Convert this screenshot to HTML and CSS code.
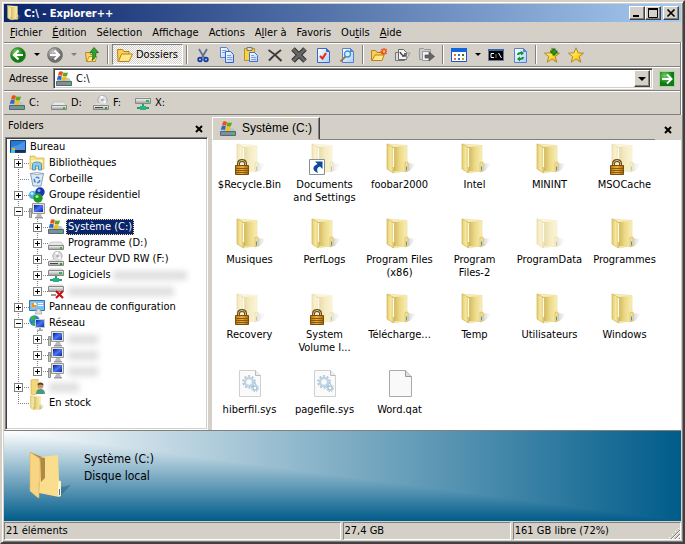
FILE: index.html
```html
<!DOCTYPE html>
<html lang="fr">

<head>
  <meta charset="UTF-8">
  <title>C:\ - Explorer++</title>
  <link rel="stylesheet" href="styles.css">
</head>

<body>
  <!-- icon sprite -->
  <svg class="sprite" aria-hidden="true">
    <defs>
      <linearGradient id="gFolder"><stop offset="0" stop-color="#cdb356"/><stop offset=".45" stop-color="#ecd987"/><stop offset="1" stop-color="#fbf0b8"/></linearGradient>
      <linearGradient id="gFlap"><stop offset="0" stop-color="#e6cc70"/><stop offset=".5" stop-color="#f6e7a0"/><stop offset="1" stop-color="#d8ba58"/></linearGradient>
      <linearGradient id="gShade"><stop offset="0" stop-color="#777" stop-opacity=".6"/><stop offset="1" stop-color="#999" stop-opacity="0"/></linearGradient>
      <linearGradient id="gDrive" x2="0" y2="1"><stop offset="0" stop-color="#fafafa"/><stop offset="1" stop-color="#9b9b9b"/></linearGradient>
      <linearGradient id="gLock"><stop offset="0" stop-color="#b87812"/><stop offset=".5" stop-color="#f0b040"/><stop offset="1" stop-color="#a86808"/></linearGradient>
      <linearGradient id="gBlue" x2="1" y2="1"><stop offset="0" stop-color="#fff"/><stop offset="1" stop-color="#a8d0ff"/></linearGradient>
      <linearGradient id="gScreen" x2="1" y2="1"><stop offset="0" stop-color="#0818a0"/><stop offset=".5" stop-color="#4878f0"/><stop offset="1" stop-color="#0820b0"/></linearGradient>
      <radialGradient id="gGreen" cx=".35" cy=".3"><stop offset="0" stop-color="#70d060"/><stop offset="1" stop-color="#127a12"/></radialGradient>
      <radialGradient id="gGray" cx=".35" cy=".3"><stop offset="0" stop-color="#c8c8c8"/><stop offset="1" stop-color="#707070"/></radialGradient>
      <linearGradient id="gStar" x2="1" y2="1"><stop offset="0" stop-color="#fffbb0"/><stop offset=".6" stop-color="#ffd62a"/><stop offset="1" stop-color="#e09810"/></linearGradient>
    </defs>

    <symbol id="folder" viewBox="0 0 32 32">
      <path d="M18 29l8-1 6-7-8-1z" fill="url(#gShade)"/>
      <path d="M3 1l20 1.500V27l-12 3z" fill="#faf0bc" stroke="#e6d695" stroke-width=".6"/>
      <path d="M9 4l13-1v17l2 1v7l-3 1-12-1z" fill="url(#gFolder)"/>
      <path d="M3 1l6 3c1.500 1 1.500 2 1.500 4v18l-1 4-6.500-4z" fill="url(#gFlap)" stroke="#cfb55a" stroke-width=".7"/>
      <path d="M9.500 5v19" stroke="#fffce8" stroke-width="1.300"/>
      <path d="M21 19.500l3-.5v9l-3 1z" fill="#f6e28c" stroke="#d4b658" stroke-width=".6"/>
      <path d="M22.500 23.500v4" stroke="#4a90d0"/>
    </symbol>

    <symbol id="bigfolder" viewBox="0 0 42 48">
      <path d="M31 45l11-11-10 2z" fill="#124a66" opacity=".35"/>
      <path d="M1 1l12 5v30z" fill="#b58b3e"/>
      <path d="M11 6l18-2 1 25 2 2v14l-2 1-20-4z" fill="#fbdd8e"/>
      <path d="M11 6l5 1v20l-4 4z" fill="#b08944"/>
      <path d="M1 1l9 6c1 1 1 3 1 5v18l-1 3v14l-2-1-7-6z" fill="#f7d582" stroke="#dcb662" stroke-width=".6"/>
      <path d="M29 31l3-1v14l-3 1z" fill="#fff3cf"/>
      <path d="M30.500 38v6" stroke="#3a80c0"/>
    </symbol>

    <symbol id="lock" viewBox="0 0 14 16">
      <path d="M3.500 7V4.500c0-4 7-4 7 0V7" fill="none" stroke="#6a5020" stroke-width="3"/>
      <path d="M3.500 7V4.500c0-4 7-4 7 0V7" fill="none" stroke="#d8c080" stroke-width="1"/>
      <path d="M.5 6.500h13v9H.5z" fill="url(#gLock)" stroke="#7a4c08"/>
      <path d="M1 9.500h12M1 11.500h12M1 13.500h12" stroke="#8a5a08"/>
    </symbol>

    <symbol id="shortcut" viewBox="0 0 16 16">
      <path d="M.5.5h15v15H.5z" fill="#fff" stroke="#8a9098"/>
      <path d="M6 2.500h7.500V10l-2.500-2.500c-3 1-3.500 3-2 6.500C3 12 3 7 8.500 5z" fill="#0c4aa0"/>
    </symbol>

    <symbol id="sysfile" viewBox="0 0 32 32">
      <path d="M5.500 2.500h16l5 5v21h-21z" fill="#fafafa" stroke="#d0d0d0"/>
      <path d="M21.500 2.500v5h5" fill="#eee" stroke="#bbb"/>
      <circle cx="15" cy="14" r="4" fill="none" stroke="#bfd4e4" stroke-width="2.500"/>
      <circle cx="15" cy="14" r="6" fill="none" stroke="#a4c0d6" stroke-width="1.500" stroke-dasharray="2 1.800"/>
      <circle cx="21" cy="20" r="2" fill="#fff" stroke="#a8c4d8" stroke-width="1.500"/>
      <circle cx="21" cy="20" r="3.500" fill="none" stroke="#9cbad0" stroke-dasharray="1.500 1.200"/>
    </symbol>

    <symbol id="file" viewBox="0 0 32 32">
      <path d="M5.500 2.500h16l6 6v20h-22z" fill="#f9f9f9" stroke="#aaa"/>
      <path d="M21.500 2.500v6h6" fill="#ddd" stroke="#999"/>
    </symbol>

    <symbol id="drive" viewBox="0 0 16 16">
      <path d="M3 7h10l3 4H0z" fill="#e8e8e8" stroke="#b0b0b0" stroke-width=".6"/>
      <path d="M.5 10.500h15v4H.5z" fill="url(#gDrive)" stroke="#888"/>
      <path d="M12 12h2v2h-2z" fill="#20c030"/>
    </symbol>

    <symbol id="sysdrive" viewBox="0 0 16 16">
      <path d="M3 7h10l3 4H0z" fill="#b8c8d0"/>
      <path d="M.5 10.500h15v4H.5z" fill="#7890a0" stroke="#586870"/>
      <path d="M12 12h2v2h-2z" fill="#30d040"/>
      <path d="M3 .8q2-1 4 .2L6 4.800Q4 3.800 2 4.800z" fill="#e85018"/>
      <path d="M7.500 1.300q2 1 4.500 0L11 5q-2 1-4.500 0z" fill="#60a818"/>
      <path d="M1.800 5.300q2-1 4 0L5 9q-2-1-4.200 0z" fill="#2868c8"/>
      <path d="M6.500 5.600q2 1 4.300 0l-1 3.800q-2 1-4.300 0z" fill="#f8c010"/>
    </symbol>

    <symbol id="dvd" viewBox="0 0 16 16">
      <circle cx="9.500" cy="5" r="4.700" fill="#e0e0e4" stroke="#999" stroke-width=".7"/>
      <path d="M9.500 5L7 1.500l3-1zM9.500 5l4 2-2 2z" fill="#fff"/>
      <circle cx="9.500" cy="5" r="1.300" fill="#aaa"/>
      <path d="M3 8h10l3 3H0z" fill="#ddd" opacity=".8"/>
      <path d="M.5 10.500h15v4H.5z" fill="url(#gDrive)" stroke="#888"/>
      <path d="M2 12.500h8" stroke="#444"/>
      <path d="M12 12h2v2h-2z" fill="#20a030"/>
    </symbol>

    <symbol id="netdrive" viewBox="0 0 16 16">
      <path d="M2 2h12l2 2H0z" fill="#eee" stroke="#aaa" stroke-width=".5"/>
      <path d="M.5 3.500h15v5H.5z" fill="url(#gDrive)" stroke="#888"/>
      <path d="M11 5h3v2h-3z" fill="#20c030"/>
      <path d="M7 9h2v3h5v2H2v-2h5z" fill="#18a070"/>
      <path d="M5 11h6v4H5z" fill="#30b080"/>
    </symbol>

    <symbol id="offdrive" viewBox="0 0 16 16">
      <path d="M2 2h12l2 2H0z" fill="#eee" stroke="#aaa" stroke-width=".5"/>
      <path d="M.5 3.500h15v5H.5z" fill="url(#gDrive)" stroke="#888"/>
      <path d="M3 12h5" stroke="#999" stroke-width="2"/>
      <path d="M8 8l7 7M15 8l-7 7" stroke="#c81010" stroke-width="2.200"/>
    </symbol>

    <symbol id="desktop" viewBox="0 0 16 16">
      <path d="M.5 1.500h15v12H.5z" fill="#2a78d0" stroke="#163e78"/>
      <path d="M1 8Q8 7 15 2v9H1z" fill="#4c94e4"/>
      <path d="M1 11h14v2H1z" fill="#1c2c48"/>
      <path d="M2 9h3v3H2z" fill="#f0b020"/><path d="M1 11h4v3H1z" fill="#3ac0f0"/>
    </symbol>

    <symbol id="library" viewBox="0 0 16 16">
      <path d="M1 1h5l1 2h8v11H1z" fill="#f6e08a" stroke="#cfae48" stroke-width=".7"/>
      <path d="M2 5h12v2H2z" fill="#fff3b8"/>
      <path d="M3.500 15V10q0-3 4.500-3t4.500 3v5h-3v-4h-3v4z" fill="#88ccf0" stroke="#3888b8" stroke-width=".8"/>
    </symbol>

    <symbol id="bin" viewBox="0 0 16 16">
      <path d="M1.500 2.500L4 15h8l2.500-12.500z" fill="#dceaf4" stroke="#8aa0b0"/>
      <path d="M1.500 2.500q6-2 13 0-6 2-13 0z" fill="#fff" stroke="#8898a8" stroke-width=".8"/>
      <circle cx="8" cy="9" r="2.700" fill="none" stroke="#4888d0" stroke-width="1.600" stroke-dasharray="4 1.500"/>
    </symbol>

    <symbol id="homegroup" viewBox="0 0 16 16">
      <circle cx="4" cy="8" r="4" fill="#48b0e0"/><circle cx="3" cy="6.500" r="1.500" fill="#c0ecff"/>
      <circle cx="11" cy="5" r="4.700" fill="#1838b0"/><circle cx="10" cy="3.500" r="1.500" fill="#88a8ff"/>
      <circle cx="9" cy="11" r="4.700" fill="#209828"/><circle cx="8" cy="9.500" r="1.600" fill="#a0f090"/>
    </symbol>

    <symbol id="computer" viewBox="0 0 16 16">
      <path d="M.5 5.500h2v9h-2z" fill="#ccc" stroke="#777" stroke-width=".8"/>
      <path d="M3.500.5h12v10h-12z" fill="#e4e4dc" stroke="#999"/>
      <path d="M5 2h9v7H5z" fill="url(#gScreen)"/>
      <path d="M8 11h4l1 3H7z" fill="#bbb"/><path d="M6 14h8v1.500H6z" fill="#999"/>
      <path d="M1 8h1" stroke="#20c020"/>
    </symbol>

    <symbol id="control" viewBox="0 0 16 16">
      <path d="M.5 1.500h15v10H.5z" fill="#7cc0f0" stroke="#2e78b8"/>
      <circle cx="5" cy="6" r="2.600" fill="#fff"/><path d="M5 6V3.400A2.600 2.600 0 1 0 7.600 6z" fill="#f09020"/>
      <path d="M9 4.500h5M9 6.500h5" stroke="#fff"/>
      <path d="M6 15l2-5h3l2 5z" fill="#ddd" stroke="#999" stroke-width=".6"/>
    </symbol>

    <symbol id="network" viewBox="0 0 16 16">
      <circle cx="5.500" cy="5.500" r="5.200" fill="#2484d8"/>
      <path d="M2 2q3-2 5 0L5 5 2 6zM3 8l4-1 1 3-3 1z" fill="#38b838"/>
      <path d="M6.500 4.500h9v8h-9z" fill="url(#gScreen)" stroke="#ccc"/>
      <path d="M10 13h2v1.500h2V16H8v-1.500h2z" fill="#aaa"/>
    </symbol>

    <symbol id="userfolder" viewBox="0 0 16 16">
      <path d="M2 1l7-1 1 14-6 2-2-1z" fill="#f2d878" stroke="#caa648" stroke-width=".6"/>
      <circle cx="11.500" cy="7" r="2.800" fill="#c89468"/>
      <path d="M8.500 6.500q0-3 3-3t3 3q-3-2-6 0z" fill="#5a3a20"/>
      <path d="M7 15q0-5 4.500-5t4.500 5z" fill="#4a9880"/>
    </symbol>

    <symbol id="back" viewBox="0 0 16 16">
      <circle cx="8" cy="8" r="7.500" fill="url(#gGreen)" stroke="#2c7a2c" stroke-width=".6"/>
      <path d="M8.500 3.500L4 8l4.500 4.500M4.500 8H13" fill="none" stroke="#fff" stroke-width="2.200"/>
    </symbol>

    <symbol id="forward" viewBox="0 0 16 16">
      <circle cx="8" cy="8" r="7.500" fill="url(#gGray)" stroke="#666" stroke-width=".6"/>
      <path d="M7.500 3.500L12 8l-4.500 4.500M11.500 8H3" fill="none" stroke="#fff" stroke-width="2.200"/>
    </symbol>

    <symbol id="up" viewBox="0 0 16 16">
      <path d="M1.500 5.500h4l1 2h5v7h-9z" fill="#f8d860" stroke="#b88820"/>
      <path d="M3 14.500l2-5h8l-2 5z" fill="#ffe890" stroke="#b88820" stroke-width=".8"/>
      <path d="M10 .5l4.500 5H12c0 4-1 6-4 8 1-3 1-5 .5-8H6z" fill="#30a830" stroke="#106810" stroke-width=".8"/>
    </symbol>

    <symbol id="openfolder" viewBox="0 0 16 16">
      <path d="M1 14.500l-.5-12h5l1.500 2h5v3" fill="#f8d058" stroke="#c08010"/>
      <path d="M1.500 14.500l3-7.500h11L12 14.500z" fill="#ffe88c" stroke="#c08010"/>
    </symbol>

    <symbol id="cut" viewBox="0 0 16 16">
      <path d="M4 2l5 8.500M12 2l-5 8.500" stroke="#607090" stroke-width="1.800"/>
      <circle cx="5" cy="12.500" r="1.800" fill="none" stroke="#103ca8" stroke-width="1.800"/>
      <circle cx="11" cy="12.500" r="1.800" fill="none" stroke="#103ca8" stroke-width="1.800"/>
    </symbol>

    <symbol id="copy" viewBox="0 0 16 16">
      <path d="M1.500.5h6l2 2v8h-8z" fill="url(#gBlue)" stroke="#5a80d0"/>
      <path d="M6.500 4.500h5l3 3v8h-8z" fill="url(#gBlue)" stroke="#3c60c0"/>
      <path d="M3 3.500h4M3 5.500h3M8 8.500h4M8 10.500h5M8 12.500h5" stroke="#80a0e0"/>
    </symbol>

    <symbol id="paste" viewBox="0 0 16 16">
      <path d="M1.500 1.500h10v12h-10z" fill="#f8d040" stroke="#b89028"/>
      <path d="M4 .5h5v3H4z" fill="#ddd" stroke="#777"/>
      <path d="M6.500 5.500h5l3 3v6h-8z" fill="url(#gBlue)" stroke="#4870c8"/>
      <path d="M8 8.500h3M8 10.500h5M8 12.500h5" stroke="#80a0e0"/>
    </symbol>

    <symbol id="delete" viewBox="0 0 16 16">
      <path d="M1.500 3Q8 7 14.500 14M14 3Q7 8 2 13.500" fill="none" stroke="#3c3c3c" stroke-width="2"/>
    </symbol>

    <symbol id="shred" viewBox="0 0 16 16">
      <path d="M2 2l12 12M14 2L2 14" stroke="#333" stroke-width="5"/>
      <path d="M2 2l12 12M14 2L2 14" stroke="#666" stroke-width="3"/>
    </symbol>

    <symbol id="props" viewBox="0 0 16 16">
      <path d="M2.500 1.500h9l3 3v11h-12z" fill="url(#gBlue)" stroke="#3c68c0"/>
      <path d="M11.500 1.500v3h3" fill="#3c68c0" stroke="#3c68c0"/>
      <path d="M5 9l2.500 2.500L11 6" fill="none" stroke="#e83010" stroke-width="2.200"/>
    </symbol>

    <symbol id="search" viewBox="0 0 16 16">
      <path d="M3.500 1.500h8l3 3v11h-11z" fill="url(#gBlue)" stroke="#5a80d0"/>
      <path d="M11.500 1.500v3h3" fill="#5a80d0" stroke="#5a80d0"/>
      <circle cx="8.500" cy="7" r="3" fill="#d4f0ff" stroke="#4090d0" stroke-width="1.300"/>
      <path d="M6.500 9.500l-5 5" stroke="#a07848" stroke-width="2"/>
    </symbol>

    <symbol id="newfolder" viewBox="0 0 16 16">
      <path d="M.5 13.500v-10h4l1.500 2h6v3" fill="#f8d058" stroke="#c08010"/>
      <path d="M1 13.500L4 8h9l-2 5.500z" fill="#ffe88c" stroke="#c08010"/>
      <path d="M13 1v7M9.500 4.500h7M10.500 2l5 5M15.500 2l-5 5" stroke="#e84820" stroke-width="1.300"/>
      <circle cx="13" cy="4.500" r="1.300" fill="#ffd030"/>
    </symbol>

    <symbol id="copyto" viewBox="0 0 16 16">
      <path d="M.5 5.500h6l3 3v5h-9z" fill="#ddd" stroke="#777"/>
      <path d="M3.500 2.500h5l3 3v7h-8z" fill="#f4f4f4" stroke="#666"/>
      <path d="M5 5q2 4 5 4V6M10 9H7" fill="none" stroke="#444" stroke-width="1.500"/>
      <path d="M11.500 12l3.500-6h-3" fill="#ddd" stroke="#999"/>
    </symbol>

    <symbol id="moveto" viewBox="0 0 16 16">
      <path d="M.5 1.500h4l1 1h6v10H.5z" fill="#ccc" stroke="#999"/>
      <path d="M3.500 4.500h7v9h-7z" fill="#f0f0f0" stroke="#999"/>
      <path d="M6 8h4V5l5.500 4.500L10 14v-3H6z" fill="#666" stroke="#444" stroke-width=".6"/>
    </symbol>

    <symbol id="views" viewBox="0 0 16 16">
      <path d="M.5 1.500h15v13H.5z" fill="#fff" stroke="#1058c8"/>
      <path d="M0 1h16v4H0z" fill="#1464dc"/>
      <path d="M3 7h2v2H3zM3 11h2v2H3z" fill="#e07050"/>
      <path d="M7 7h2v2H7zM7 11h2v2H7z" fill="#4868c8"/>
      <path d="M11 7h2v2h-2z" fill="#287828"/><path d="M11 11h2v2h-2z" fill="#d09020"/>
    </symbol>

    <symbol id="cmd" viewBox="0 0 16 16">
      <path d="M.5 2.500h15v11H.5z" fill="#000" stroke="#6878a0"/>
      <path d="M0 2h16v2H0z" fill="#3c68b0"/>
      <path d="M6 6.500H3v4h3M8 7.500v1M8 9.500v1M10.500 6l3 5" fill="none" stroke="#fff"/>
    </symbol>

    <symbol id="refresh" viewBox="0 0 16 16">
      <path d="M2.500 1.500h9l3 3v11h-12z" fill="url(#gBlue)" stroke="#5a80d0"/>
      <path d="M11.500 1.500v3h3" fill="#5a80d0" stroke="#5a80d0"/>
      <path d="M5 8q0-3 4-3l-.5-1.500L12 6 9.500 8.500 9 7Q7 7 7 8zM12 10q0 3-4 3v1.500L5 12l3-2.500V11q2 0 2-1z" fill="#189028"/>
    </symbol>

    <symbol id="star" viewBox="0 0 16 16">
      <path d="M8 .8l2 5 5.500.4-4.300 3.400 1.600 5.600L8 12l-4.800 3.200 1.600-5.600L.5 6.200 6 5.800z" fill="url(#gStar)" stroke="#b08018" stroke-width=".9"/>
    </symbol>

    <symbol id="addstar" viewBox="0 0 16 16">
      <use href="#star"/>
      <path d="M10 1.500v7M6.500 5h7" stroke="#0c680c" stroke-width="3"/>
      <path d="M10 2.500v5M7.500 5h5" stroke="#38a838"/>
    </symbol>

    <symbol id="go" viewBox="0 0 16 16">
      <path d="M.5.5h15v15H.5z" fill="url(#gGreen)" stroke="#a0d8a0"/>
      <path d="M3 8h9M8 3.500L12.500 8 8 12.500" fill="none" stroke="#fff" stroke-width="2"/>
    </symbol>

    <symbol id="close" viewBox="0 0 8 8">
      <path d="M1 1l6 6M7 1L1 7" stroke="#000" stroke-width="2"/>
    </symbol>
  </svg>

  <div class="window">
    <header class="titlebar">
      <svg class="icon"><use href="#folder"/></svg>
      <h1>C:\ - Explorer++</h1>
      <button class="caption-btn" aria-label="Réduire"><svg viewBox="0 0 10 10"><path d="M1 8h6" stroke="#000" stroke-width="2"/></svg></button>
      <button class="caption-btn" aria-label="Agrandir"><svg viewBox="0 0 10 10"><path d="M.5 1.500h9v8h-9z" fill="none" stroke="#000"/><path d="M0 1h10" stroke="#000" stroke-width="2"/></svg></button>
      <button class="caption-btn last" aria-label="Fermer"><svg viewBox="0 0 10 10"><path d="M1.500 1.500l7 7M8.500 1.500l-7 7" stroke="#000" stroke-width="1.700"/></svg></button>
    </header>

    <nav class="menubar">
      <button><u>F</u>ichier</button>
      <button><u>É</u>dition</button>
      <button>Sélection</button>
      <button>Aff<u>i</u>chage</button>
      <button>Actions</button>
      <button>A<u>l</u>ler à</button>
      <button>Favoris</button>
      <button>Ou<u>t</u>ils</button>
      <button><u>A</u>ide</button>
    </nav>

    <div class="band toolbar">
      <button class="tool" aria-label="Précédent"><svg class="icon"><use href="#back"/></svg></button>
      <button class="drop" aria-label="Historique précédent"></button>
      <button class="tool" aria-label="Suivant"><svg class="icon"><use href="#forward"/></svg></button>
      <button class="drop off" aria-label="Historique suivant"></button>
      <button class="tool" aria-label="Dossier parent"><svg class="icon"><use href="#up"/></svg></button>
      <span class="sep"></span>
      <button class="tool pressed"><svg class="icon"><use href="#openfolder"/></svg>Dossiers</button>
      <span class="sep"></span>
      <button class="tool" aria-label="Couper"><svg class="icon"><use href="#cut"/></svg></button>
      <button class="tool" aria-label="Copier"><svg class="icon"><use href="#copy"/></svg></button>
      <button class="tool" aria-label="Coller"><svg class="icon"><use href="#paste"/></svg></button>
      <button class="tool" aria-label="Supprimer"><svg class="icon"><use href="#delete"/></svg></button>
      <button class="tool" aria-label="Supprimer définitivement"><svg class="icon"><use href="#shred"/></svg></button>
      <button class="tool" aria-label="Propriétés"><svg class="icon"><use href="#props"/></svg></button>
      <button class="tool" aria-label="Rechercher"><svg class="icon"><use href="#search"/></svg></button>
      <span class="sep"></span>
      <button class="tool" aria-label="Nouveau dossier"><svg class="icon"><use href="#newfolder"/></svg></button>
      <button class="tool" aria-label="Copier vers"><svg class="icon"><use href="#copyto"/></svg></button>
      <button class="tool" aria-label="Déplacer vers"><svg class="icon"><use href="#moveto"/></svg></button>
      <span class="sep"></span>
      <button class="tool" aria-label="Affichages"><svg class="icon"><use href="#views"/></svg></button>
      <button class="drop" aria-label="Choisir l'affichage"></button>
      <button class="tool" aria-label="Invite de commandes"><svg class="icon"><use href="#cmd"/></svg></button>
      <button class="tool" aria-label="Actualiser"><svg class="icon"><use href="#refresh"/></svg></button>
      <span class="sep"></span>
      <button class="tool" aria-label="Ajouter aux favoris"><svg class="icon"><use href="#addstar"/></svg></button>
      <button class="tool" aria-label="Favoris"><svg class="icon"><use href="#star"/></svg></button>
    </div>

    <div class="band address">
      <label for="path">Adresse</label>
      <div class="combo">
        <svg class="icon"><use href="#sysdrive"/></svg>
        <input id="path" type="text" value="C:\">
        <button class="combo-btn" aria-label="Dérouler"></button>
      </div>
      <button class="go" aria-label="Aller"><svg class="icon"><use href="#go"/></svg></button>
    </div>

    <div class="band drives">
      <button><svg class="icon"><use href="#sysdrive"/></svg>C:</button>
      <button><svg class="icon"><use href="#drive"/></svg>D:</button>
      <button><svg class="icon"><use href="#dvd"/></svg>F:</button>
      <button><svg class="icon"><use href="#netdrive"/></svg>X:</button>
    </div>

    <main class="content">
      <aside class="folders">
        <div class="folders-head">
          <h2>Folders</h2>
          <button class="close" aria-label="Fermer le volet"><svg><use href="#close"/></svg></button>
        </div>
        <div class="tree">
          <div class="row"><svg class="icon"><use href="#desktop"/></svg><span class="name">Bureau</span></div>
          <ul>
            <li><div class="row branch"><button class="toggle" aria-label="Développer"></button><svg class="icon"><use href="#library"/></svg><span class="name">Bibliothèques</span></div></li>
            <li><div class="row branch leaf"><svg class="icon"><use href="#bin"/></svg><span class="name">Corbeille</span></div></li>
            <li><div class="row branch"><button class="toggle" aria-label="Développer"></button><svg class="icon"><use href="#homegroup"/></svg><span class="name">Groupe résidentiel</span></div></li>
            <li>
              <div class="row branch"><button class="toggle open" aria-label="Réduire"></button><svg class="icon"><use href="#computer"/></svg><span class="name">Ordinateur</span></div>
              <ul>
                <li><div class="row branch"><button class="toggle" aria-label="Développer"></button><svg class="icon"><use href="#sysdrive"/></svg><span class="name selected">Système (C:)</span></div></li>
                <li><div class="row branch"><button class="toggle" aria-label="Développer"></button><svg class="icon"><use href="#drive"/></svg><span class="name">Programme (D:)</span></div></li>
                <li><div class="row branch"><button class="toggle" aria-label="Développer"></button><svg class="icon"><use href="#dvd"/></svg><span class="name">Lecteur DVD RW (F:)</span></div></li>
                <li><div class="row branch"><button class="toggle" aria-label="Développer"></button><svg class="icon"><use href="#netdrive"/></svg><span class="name">Logiciels</span><span class="masked wide"></span></div></li>
                <li><div class="row branch"><button class="toggle" aria-label="Développer"></button><svg class="icon"><use href="#offdrive"/></svg><span class="masked widest"></span></div></li>
              </ul>
            </li>
            <li><div class="row branch"><button class="toggle" aria-label="Développer"></button><svg class="icon"><use href="#control"/></svg><span class="name">Panneau de configuration</span></div></li>
            <li>
              <div class="row branch"><button class="toggle open" aria-label="Réduire"></button><svg class="icon"><use href="#network"/></svg><span class="name">Réseau</span></div>
              <ul>
                <li><div class="row branch"><button class="toggle" aria-label="Développer"></button><svg class="icon"><use href="#computer"/></svg><span class="masked"></span></div></li>
                <li><div class="row branch"><button class="toggle" aria-label="Développer"></button><svg class="icon"><use href="#computer"/></svg><span class="masked"></span></div></li>
                <li><div class="row branch"><button class="toggle" aria-label="Développer"></button><svg class="icon"><use href="#computer"/></svg><span class="masked"></span></div></li>
              </ul>
            </li>
            <li><div class="row branch"><button class="toggle" aria-label="Développer"></button><svg class="icon"><use href="#userfolder"/></svg><span class="masked"></span></div></li>
            <li><div class="row branch leaf"><svg class="icon"><use href="#folder"/></svg><span class="name">En stock</span></div></li>
          </ul>
        </div>
      </aside>

      <section class="pane">
        <div class="tabs">
          <button class="tab"><svg class="icon"><use href="#sysdrive"/></svg>Système (C:)</button>
          <div class="tabs-rest"></div>
          <button class="close" aria-label="Fermer l'onglet"><svg><use href="#close"/></svg></button>
        </div>
        <ul class="files">
          <li><span class="thumb"><svg class="pic faded"><use href="#folder"/></svg><svg class="badge"><use href="#lock"/></svg></span>$Recycle.Bin</li>
          <li><span class="thumb"><svg class="pic faded"><use href="#folder"/></svg><svg class="badge"><use href="#shortcut"/></svg></span>Documents<br>and Settings</li>
          <li><span class="thumb"><svg class="pic"><use href="#folder"/></svg></span>foobar2000</li>
          <li><span class="thumb"><svg class="pic"><use href="#folder"/></svg></span>Intel</li>
          <li><span class="thumb"><svg class="pic"><use href="#folder"/></svg></span>MININT</li>
          <li><span class="thumb"><svg class="pic faded"><use href="#folder"/></svg><svg class="badge"><use href="#lock"/></svg></span>MSOCache</li>
          <li><span class="thumb"><svg class="pic"><use href="#folder"/></svg></span>Musiques</li>
          <li><span class="thumb"><svg class="pic"><use href="#folder"/></svg></span>PerfLogs</li>
          <li><span class="thumb"><svg class="pic"><use href="#folder"/></svg></span>Program Files<br>(x86)</li>
          <li><span class="thumb"><svg class="pic"><use href="#folder"/></svg></span>Program<br>Files-2</li>
          <li><span class="thumb"><svg class="pic faded"><use href="#folder"/></svg></span>ProgramData</li>
          <li><span class="thumb"><svg class="pic"><use href="#folder"/></svg></span>Programmes</li>
          <li><span class="thumb"><svg class="pic faded"><use href="#folder"/></svg><svg class="badge"><use href="#lock"/></svg></span>Recovery</li>
          <li><span class="thumb"><svg class="pic faded"><use href="#folder"/></svg><svg class="badge"><use href="#lock"/></svg></span>System<br>Volume I...</li>
          <li><span class="thumb"><svg class="pic"><use href="#folder"/></svg></span>Télécharge...</li>
          <li><span class="thumb"><svg class="pic"><use href="#folder"/></svg></span>Temp</li>
          <li><span class="thumb"><svg class="pic"><use href="#folder"/></svg></span>Utilisateurs</li>
          <li><span class="thumb"><svg class="pic"><use href="#folder"/></svg></span>Windows</li>
          <li><span class="thumb"><svg class="pic"><use href="#sysfile"/></svg></span>hiberfil.sys</li>
          <li><span class="thumb"><svg class="pic"><use href="#sysfile"/></svg></span>pagefile.sys</li>
          <li><span class="thumb"><svg class="pic"><use href="#file"/></svg></span>Word.qat</li>
        </ul>
      </section>
    </main>

    <section class="details">
      <svg><use href="#bigfolder"/></svg>
      <p>Système (C:)<br>Disque local</p>
    </section>

    <footer class="status">
      <span>21 éléments</span>
      <span>27,4 GB</span>
      <span class="grip">161 GB libre (72%)</span>
    </footer>
  </div>
</body>

</html>
```

FILE: styles.css
```css
* {
  box-sizing: border-box;
}

body {
  margin: 0;
  font-family: "DejaVu Sans Condensed", "DejaVu Sans", sans-serif;
  font-size: 11px;
  line-height: 13px;
  color: #000;
}

button, input {
  font: inherit;
  color: inherit;
  padding: 0;
  border: none;
  background: none;
}

h1, h2, p, ul {
  margin: 0;
  padding: 0;
  font-size: inherit;
  font-weight: normal;
  list-style: none;
}

.sprite {
  position: absolute;
  width: 0;
  height: 0;
}

.icon {
  width: 16px;
  height: 16px;
  flex: none;
}

.window {
  display: flex;
  flex-direction: column;
  min-height: 100vh;
  padding: 2px;
  background: #d4d0c8;
  border: 2px solid;
  border-color: #d4d0c8 #404040 #404040 #d4d0c8;
  box-shadow: inset 1px 1px #fff, inset -1px -1px #808080;
}

/* title bar */
.titlebar {
  display: flex;
  align-items: center;
  height: 18px;
  padding: 0 2px;
  background: linear-gradient(90deg, #0a246a, #a6caf0);
  color: #fff;
}

.titlebar h1 {
  flex: 1;
  padding-left: 2px;
  font-weight: bold;
}

.caption-btn {
  display: flex;
  align-items: center;
  justify-content: center;
  width: 16px;
  height: 14px;
  background: #d4d0c8;
  border: 1px solid;
  border-color: #fff #404040 #404040 #fff;
  box-shadow: inset -1px -1px #808080;
}

.caption-btn.last {
  margin-left: 2px;
}

.caption-btn svg {
  width: 10px;
  height: 10px;
}

/* menu */
.menubar {
  display: flex;
  height: 20px;
  padding-left: 1px;
}

.menubar button {
  padding: 0 5px;
}

/* bands */
.band {
  display: flex;
  align-items: center;
  height: 24px;
  padding: 0 2px;
  border: 1px solid #808080;
  border-width: 1px 1px 0 0;
  box-shadow: inset 0 1px #fff, 1px 0 #fff;
}

.band.drives {
  border-bottom-width: 1px;
  margin-bottom: 2px;
  height: 25px;
}

.tool {
  display: flex;
  align-items: center;
  justify-content: center;
  width: 24px;
  height: 22px;
}

.tool.pressed {
  width: 71px;
  height: 21px;
  gap: 3px;
  border: 1px solid;
  border-color: #808080 #fff #fff #808080;
  background: repeating-conic-gradient(#fff 0 25%, #d4d0c8 0 50%) 0 0 / 2px 2px;
}

.drop {
  display: flex;
  justify-content: center;
  width: 13px;
}

.drop::before, .combo-btn::before {
  content: "";
  border: 3px solid transparent;
  border-top-color: #000;
  border-bottom: none;
}

.combo-btn::before {
  border-width: 4px 4px 0;
}

.drop.off::before {
  border-top-color: #808080;
}

.sep {
  width: 2px;
  height: 19px;
  margin: 0 3px;
  border-left: 1px solid #808080;
  border-right: 1px solid #fff;
}

.address label {
  width: 47px;
  padding-left: 3px;
}

.combo {
  display: flex;
  align-items: center;
  flex: 1;
  height: 21px;
  padding: 2px;
  background: #fff;
  border: 1px solid;
  border-color: #808080 #fff #fff #808080;
  box-shadow: inset 1px 1px #404040, inset -1px -1px #d4d0c8;
}

.combo input {
  flex: 1;
  min-width: 0;
  padding-left: 4px;
  outline: none;
}

.combo-btn {
  display: flex;
  align-items: center;
  justify-content: center;
  width: 16px;
  height: 17px;
  background: #d4d0c8;
  border: 1px solid;
  border-color: #fff #404040 #404040 #fff;
  box-shadow: inset -1px -1px #808080;
}

.go {
  display: flex;
  padding: 0 3px 0 6px;
}

.drives button {
  display: flex;
  align-items: center;
  gap: 4px;
  width: 42px;
  padding-left: 3px;
}

/* main area */
.content {
  display: flex;
  flex: 1;
  gap: 4px;
}

.folders {
  display: flex;
  flex-direction: column;
  width: 204px;
}

.folders-head {
  display: flex;
  justify-content: space-between;
  height: 20px;
  padding: 2px 5px 0 4px;
}

.close {
  display: flex;
  align-items: center;
  padding-top: 2px;
}

.close svg {
  width: 8px;
  height: 8px;
}

.tree {
  flex: 1;
  padding: 1px 2px;
  margin-left: 1px;
  background: #fff;
  border: 1px solid;
  border-color: #808080 #fff #fff #808080;
  box-shadow: inset 1px 1px #404040, inset -1px -1px #d4d0c8;
}

.tree > .row {
  padding-left: 2px;
}

.tree ul {
  padding-left: 6px;
}

.tree ul ul {
  padding-left: 19px;
}

.tree li {
  background: repeating-linear-gradient(#808080 0 1px, transparent 1px 2px) 4px 0 / 1px 100% no-repeat;
}

.tree li:last-child {
  background-size: 1px 8px;
}

.row {
  display: flex;
  align-items: center;
  height: 16px;
  white-space: nowrap;
}

.row.branch {
  background: repeating-linear-gradient(90deg, #808080 0 1px, transparent 1px 2px) 4px 8px / 11px 1px no-repeat;
}

.row.leaf {
  padding-left: 15px;
}

.toggle {
  width: 9px;
  height: 9px;
  margin-right: 6px;
  border: 1px solid #808080;
  background:
    linear-gradient(#000, #000) center / 5px 1px no-repeat,
    linear-gradient(#000, #000) center / 1px 5px no-repeat,
    #fff;
}

.toggle.open {
  background: linear-gradient(#000, #000) center / 5px 1px no-repeat, #fff;
}

.name {
  height: 16px;
  margin-left: 2px;
  padding: 0 2px;
  line-height: 15px;
}

.name.selected {
  background: #0a246a;
  color: #fff;
  outline: 1px dotted #f5db95;
  outline-offset: -1px;
}

.masked {
  width: 30px;
  height: 9px;
  margin-left: 4px;
  background: #ddd;
  filter: blur(3px);
}

.masked.wide {
  width: 74px;
  margin-left: 0;
}

.masked.widest {
  width: 106px;
}

.pane {
  display: flex;
  flex-direction: column;
  flex: 1;
  background: #fff;
}

.tabs {
  display: flex;
  height: 23px;
  padding-right: 9px;
  background: #d4d0c8;
}

.tab {
  display: flex;
  align-items: center;
  gap: 6px;
  padding: 0 7px;
  font-family: "Liberation Sans", Arial, sans-serif;
  font-size: 12px;
  border: 1px solid;
  border-color: #fff #404040 transparent #fff;
  box-shadow: inset -1px 0 #808080;
}

.tabs-rest {
  flex: 1;
  margin-right: 9px;
  border-bottom: 1px solid #808080;
}

.files {
  display: grid;
  grid-template-columns: repeat(auto-fill, 75px);
  grid-auto-rows: 62px;
  row-gap: 13px;
  padding-top: 3px;
}

.files li {
  display: flex;
  flex-direction: column;
  align-items: center;
  text-align: center;
  white-space: nowrap;
}

.thumb {
  position: relative;
  height: 35px;
}

.pic {
  display: block;
  width: 32px;
  height: 32px;
}

.pic.faded {
  opacity: .5;
}

.badge {
  position: absolute;
  left: 0;
  bottom: 3px;
  width: 16px;
  height: 16px;
}

/* details */
.details {
  display: flex;
  height: 91px;
  padding: 20px 25px;
  gap: 13px;
  border-top: 1px solid #808080;
  background: linear-gradient(90deg, #fff, #005c8a), linear-gradient(#fff, #005c8a);
  background-blend-mode: darken;
}

.details svg {
  width: 42px;
  height: 48px;
}

.details p {
  font-size: 12px;
  line-height: 17px;
}

/* status bar */
.status {
  display: grid;
  grid-template-columns: 2fr 1fr 1fr;
  gap: 2px;
  padding-top: 1px;
}

.status span {
  height: 18px;
  padding-left: 1px;
  line-height: 16px;
  border: 1px solid;
  border-color: #808080 #fff #fff #808080;
}

.status .grip {
  background:
    linear-gradient(135deg, #d4d0c8 50%, transparent 50%) right bottom / 12px 12px no-repeat,
    repeating-linear-gradient(135deg, #d4d0c8 0 1px, #808080 1px 2px, #fff 2px 3px) right bottom / 12px 12px no-repeat;
}
```
